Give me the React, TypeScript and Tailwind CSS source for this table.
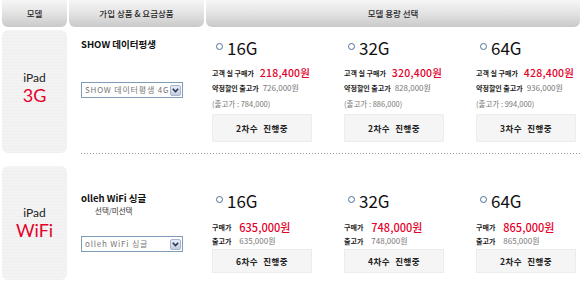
const font = { fontFamily: '"Noto Sans CJK KR", "Noto Sans", sans-serif' }
const latin = { fontFamily: 'Lato, "Noto Sans", sans-serif' }

type Cap = {
  size: string
  price: string
  discount?: string
  release: string
  round: string
}

const row1: Cap[] = [
  { size: '16G', price: '218,400원', discount: '726,000원', release: '784,000', round: '2차수 진행중' },
  { size: '32G', price: '320,400원', discount: '828,000원', release: '886,000', round: '2차수 진행중' },
  { size: '64G', price: '428,400원', discount: '936,000원', release: '994,000', round: '3차수 진행중' },
]

const row2: Cap[] = [
  { size: '16G', price: '635,000원', release: '635,000원', round: '6차수 진행중' },
  { size: '32G', price: '748,000원', release: '748,000원', round: '4차수 진행중' },
  { size: '64G', price: '865,000원', release: '865,000원', round: '2차수 진행중' },
]

function HeadCell({ label, className }: { label: string; className: string }) {
  return (
    <div
      className={`h-[27px] rounded-b-[6px] bg-gradient-to-b from-[#f6f6f6] via-[#e3e3e3] to-[#c9c9c9] flex items-center justify-center text-[8.5px] font-medium text-[#2a2a2a] ${className}`}
    >
      {label}
    </div>
  )
}

function ModelCell({ sub, className }: { sub: string; className: string }) {
  return (
    <div
      className={`w-[65px] shrink-0 rounded-[6px] bg-[repeating-linear-gradient(180deg,#f3f3f3_0px,#f3f3f3_2px,#efefef_2px,#efefef_3px)] flex flex-col items-center justify-center ${className}`}
      style={latin}
    >
      <div className="text-[12px] leading-[15px] text-[#222]">iPad</div>
      <div className="text-[18px] leading-[21px] text-[#e4002b]">{sub}</div>
    </div>
  )
}

function FakeSelect({ label }: { label: string }) {
  return (
    <div className="w-[102px] h-[16px] border border-[#7f9db9] bg-white flex items-center">
      <span className="flex-1 pl-[3px] text-[8px] tracking-[0.8px] text-[#777] whitespace-nowrap overflow-hidden leading-[14px]">
        {label}
      </span>
      <span className="w-[11px] h-[11px] mr-[1px] border border-[#a7b5cc] rounded-[2px] bg-gradient-to-b from-[#e6ebf5] to-[#c3cde0] flex items-center justify-center">
        <svg width="7" height="5" viewBox="0 0 7 5">
          <path d="M0.8 0.8 L3.5 3.6 L6.2 0.8" fill="none" stroke="#2a3550" strokeWidth="1.6" />
        </svg>
      </span>
    </div>
  )
}

function SizeTitle({ size }: { size: string }) {
  return (
    <div className="flex items-start h-[18px]">
      <span className="w-[7px] h-[7px] rounded-full border border-[#4d6f9c] mt-[4px] ml-[4px] mr-[4px]" />
      <span className="text-[17px] leading-[18px] text-[#111]">{size}</span>
    </div>
  )
}

function RoundBox({ label, h }: { label: string; h: string }) {
  return (
    <div
      className={`w-[100px] ${h} bg-[#f5f5f5] border border-[#ececec] flex items-center justify-center text-[8.5px] font-bold text-[#222] tracking-[0.4px] [word-spacing:3px]`}
    >
      {label}
    </div>
  )
}

export default function App() {
  return (
    <div className="w-[580px] h-[281px] bg-white overflow-hidden" style={font}>
      <div className="flex gap-[2px] pl-[2px]">
        <HeadCell label="모델" className="w-[65px]" />
        <HeadCell label="가입 상품 & 요금상품" className="w-[135px]" />
        <HeadCell label="모델 용량 선택" className="flex-1" />
      </div>

      <div className="flex mt-[3px] pl-[2px] h-[123px]">
        <ModelCell sub="3G" className="h-[123px] pb-[7px]" />
        <div className="w-[139px] shrink-0 pl-[14px] pt-[8px]">
          <div className="text-[9.5px] leading-[12px] font-bold text-[#111]">SHOW 데이터평생</div>
          <div className="mt-[32px]">
            <FakeSelect label="SHOW 데이터평생 4G" />
          </div>
        </div>
        <div className="flex pl-[6px] pt-[9px]">
          {row1.map((c) => (
            <div key={c.size} className="w-[132px] shrink-0">
              <SizeTitle size={c.size} />
              <div className="mt-[9px] flex items-center h-[14px] whitespace-nowrap">
                <span className="text-[7px] text-[#222] font-bold">고객 실 구매가</span>
                <span className="ml-[6px] text-[10.5px] text-[#e4002b] font-medium tracking-[0.2px]">{c.price}</span>
              </div>
              <div className="flex items-center h-[16px] whitespace-nowrap">
                <span className="text-[7px] text-[#222] font-bold">약정할인 출고가</span>
                <span className="ml-[4px] text-[8px] text-[#777]">{c.discount}</span>
              </div>
              <div className="h-[15px] flex items-center text-[7.5px] text-[#777] whitespace-nowrap">
                (출고가 : {c.release})
              </div>
              <div className="mt-[3px]">
                <RoundBox label={c.round} h="h-[28px]" />
              </div>
            </div>
          ))}
        </div>
      </div>

      <div className="h-[13px] pl-[81px]">
        <div className="h-px bg-[linear-gradient(to_right,#9a9a9a_1px,transparent_1px)] bg-[length:3px_1px]" />
      </div>

      <div className="flex pl-[2px] h-[115px]">
        <ModelCell sub="WiFi" className="h-[114px]" />
        <div className="w-[139px] shrink-0 pl-[14px] pt-[26px]">
          <div className="text-[9.5px] leading-[12px] font-bold text-[#111]">olleh WiFi 싱글</div>
          <div className="pl-[14px] mt-[2px] text-[7.5px] leading-[10px] text-[#333]">선택/미선택</div>
          <div className="mt-[20px]">
            <FakeSelect label="olleh WiFi 싱글" />
          </div>
        </div>
        <div className="flex pl-[6px] pt-[26px]">
          {row2.map((c) => (
            <div key={c.size} className="w-[132px] shrink-0">
              <SizeTitle size={c.size} />
              <div className="mt-[10px] flex items-center h-[14px] whitespace-nowrap">
                <span className="text-[7px] text-[#222] font-bold">구매가</span>
                <span className="ml-[8px] text-[11px] text-[#e4002b] font-medium">{c.price}</span>
              </div>
              <div className="flex items-center h-[14px] whitespace-nowrap">
                <span className="text-[7px] text-[#222] font-bold">출고가</span>
                <span className="ml-[8px] text-[8px] text-[#777]">{c.release}</span>
              </div>
              <div className="mt-[1px]">
                <RoundBox label={c.round} h="h-[24px]" />
              </div>
            </div>
          ))}
        </div>
      </div>
    </div>
  )
}
